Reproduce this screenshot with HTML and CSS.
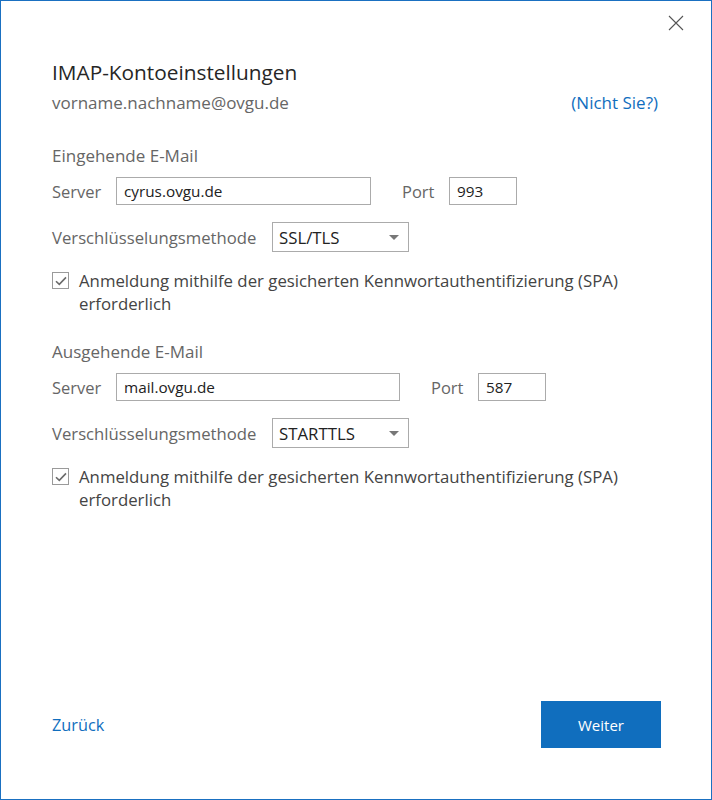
FILE: index.html
```html
<!DOCTYPE html>
<html lang="de">
<head>
<meta charset="utf-8">
<title>IMAP-Kontoeinstellungen</title>
<link rel="stylesheet" href="styles.css">
</head>
<body>
<div class="dialog">
  <div class="topbar">
    <button class="close" aria-label="Schließen">
      <svg width="16" height="16" viewBox="0 0 16 16"><path d="M1 1 L15 15 M15 1 L1 15" stroke="#555" stroke-width="1.1" fill="none"/></svg>
    </button>
  </div>
  <div class="content">
    <h1 class="title">IMAP-Kontoeinstellungen</h1>
    <div class="account">
      <span class="email">vorname.nachname@ovgu.de</span>
      <a class="link nicht" href="#">(Nicht Sie?)</a>
    </div>

    <section class="group first">
      <div class="group-title">Eingehende E-Mail</div>
      <div class="row">
        <span class="lbl server-lbl">Server</span>
        <span class="input server-in in-short">cyrus.ovgu.de</span>
        <span class="lbl port-lbl">Port</span>
        <span class="input port-in">993</span>
      </div>
      <div class="row sel-row">
        <span class="lbl enc-lbl">Verschlüsselungsmethode</span>
        <span class="select"><span>SSL/TLS</span><i class="caret"></i></span>
      </div>
      <div class="check-row">
        <span class="box"><svg width="12" height="10" viewBox="0 0 12 10"><path d="M1 5.2 L4.3 8.4 L11 1.4" stroke="#6b6b6b" stroke-width="1.6" fill="none"/></svg></span>
        <span class="check-text">Anmeldung mithilfe der gesicherten Kennwortauthentifizierung (SPA) erforderlich</span>
      </div>
    </section>

    <section class="group second">
      <div class="group-title">Ausgehende E-Mail</div>
      <div class="row">
        <span class="lbl server-lbl">Server</span>
        <span class="input server-in in-long">mail.ovgu.de</span>
        <span class="lbl port-lbl">Port</span>
        <span class="input port-in">587</span>
      </div>
      <div class="row sel-row">
        <span class="lbl enc-lbl">Verschlüsselungsmethode</span>
        <span class="select"><span>STARTTLS</span><i class="caret"></i></span>
      </div>
      <div class="check-row">
        <span class="box"><svg width="12" height="10" viewBox="0 0 12 10"><path d="M1 5.2 L4.3 8.4 L11 1.4" stroke="#6b6b6b" stroke-width="1.6" fill="none"/></svg></span>
        <span class="check-text">Anmeldung mithilfe der gesicherten Kennwortauthentifizierung (SPA) erforderlich</span>
      </div>
    </section>
  </div>
  <div class="footer">
    <a class="link back" href="#">Zurück</a>
    <button class="primary">Weiter</button>
  </div>
</div>
</body>
</html>
```

FILE: styles.css
```css
html, body {
  margin: 0;
  padding: 0;
  background: #ffffff;
}
body {
  font-family: "Open Sans", "Noto Sans", "Liberation Sans", sans-serif;
  color: #444;
}
.dialog {
  width: 712px;
  height: 800px;
  box-sizing: border-box;
  border: 1px solid #1a70c1;
  display: flex;
  flex-direction: column;
  background: #fff;
}
.topbar {
  height: 44px;
  display: flex;
  justify-content: flex-end;
  align-items: flex-start;
}
.close {
  margin: 14px 27px 0 0;
  width: 16px;
  height: 16px;
  padding: 0;
  border: 0;
  background: transparent;
  display: flex;
}
.content {
  flex: 1;
  padding: 0 53px 0 51px;
}
.title {
  margin: 13px 0 0 0;
  font-size: 20.8px;
  font-weight: 400;
  line-height: 28px;
  color: #262626;
}
.account {
  display: flex;
  justify-content: space-between;
  align-items: center;
  margin-top: 4px;
  height: 24px;
  font-size: 17px;
}
.email {
  color: #666;
}
.link {
  color: #106ebe;
  text-decoration: none;
}
.nicht {
  font-size: 17px;
}
.group-title {
  font-size: 17px;
  line-height: 22px;
  color: #666;
}
.group.first {
  margin-top: 31px;
}
.group.second {
  margin-top: 26px;
}
.row {
  display: flex;
  align-items: center;
  margin-top: 10px;
  font-size: 16.5px;
}
.sel-row {
  margin-top: 17px;
}
.lbl {
  color: #666;
}
.enc-lbl {
  font-size: 16.7px;
}
.server-lbl {
  width: 64px;
}
.enc-lbl {
  width: 220px;
}
.input {
  box-sizing: border-box;
  height: 28px;
  border: 1px solid #ababab;
  font-size: 15.3px;
  color: #222;
  padding: 0 7px;
  display: flex;
  align-items: center;
}
.in-short { width: 255px; }
.in-long { width: 284px; }
.port-lbl {
  margin-left: 31px;
  width: 47px;
}
.port-in {
  width: 68px;
}
.select {
  box-sizing: border-box;
  width: 137px;
  height: 30px;
  border: 1px solid #ababab;
  display: flex;
  align-items: center;
  justify-content: space-between;
  padding: 0 9px 0 6px;
  font-size: 16.8px;
  color: #222;
}
.caret {
  width: 0;
  height: 0;
  border-left: 5px solid transparent;
  border-right: 5px solid transparent;
  border-top: 5px solid #777;
}
.check-row {
  display: flex;
  align-items: flex-start;
  margin-top: 17px;
}
.box {
  box-sizing: border-box;
  width: 17px;
  height: 17px;
  border: 1px solid #9a9a9a;
  margin-top: 3px;
  display: flex;
  align-items: center;
  justify-content: center;
  flex: none;
}
.check-text {
  margin-left: 10px;
  font-size: 16.8px;
  line-height: 23px;
  color: #444;
}
.footer {
  display: flex;
  justify-content: space-between;
  align-items: center;
  padding: 0 50px 0 51px;
  height: 47px;
  margin-bottom: 51px;
}
.back {
  font-size: 16.3px;
}
.primary {
  width: 120px;
  height: 47px;
  background: #106ebe;
  color: #fff;
  border: 0;
  font-family: inherit;
  font-size: 15px;
}
```
